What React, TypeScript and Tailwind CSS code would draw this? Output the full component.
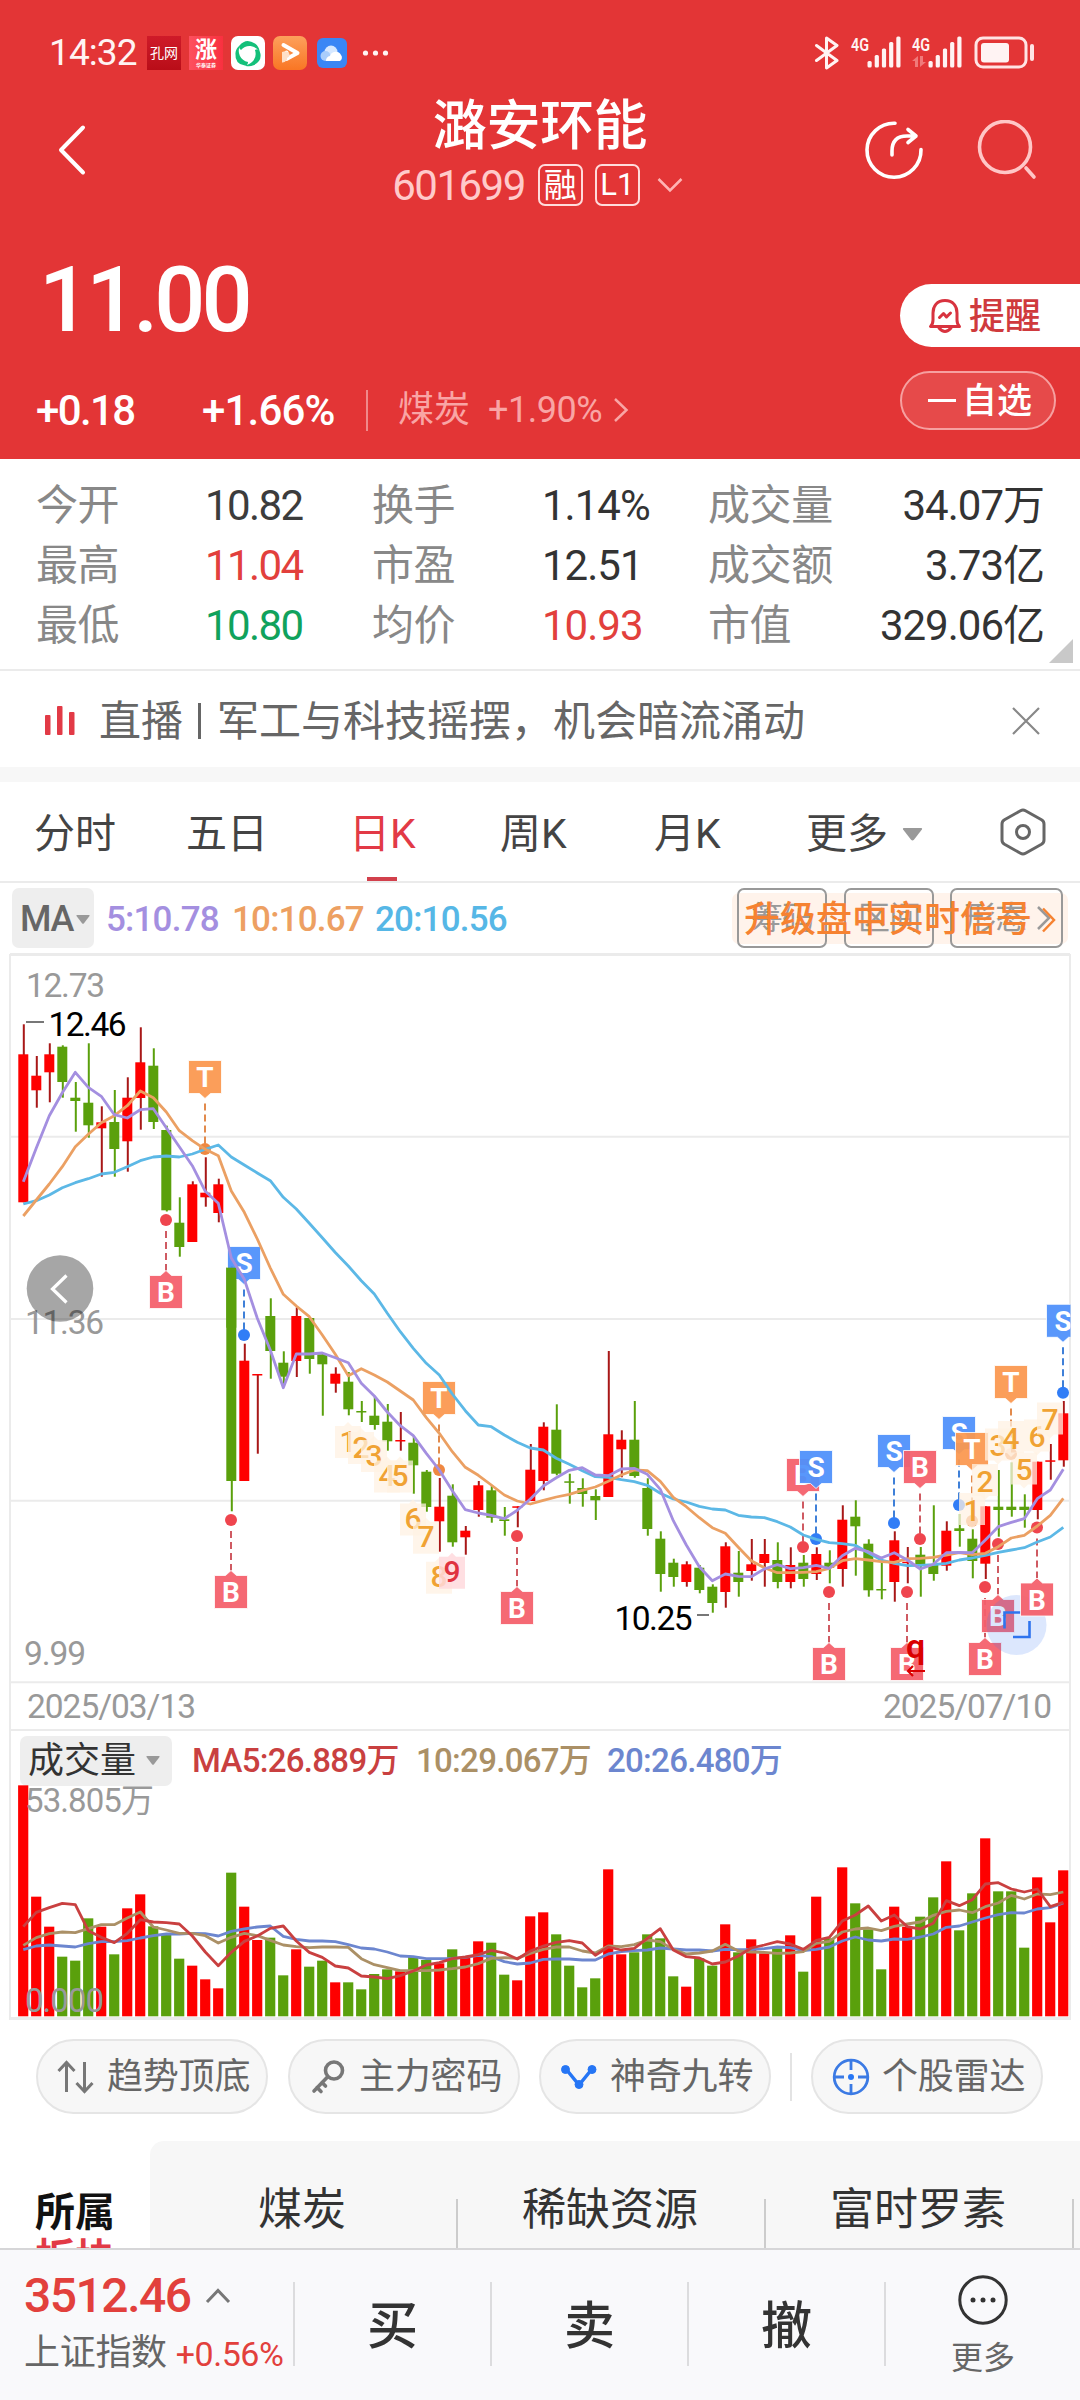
import type { ReactNode } from 'react'

type Candle = [up: 0 | 1, top: number, bottom: number, high: number, low: number]
type MarkKind = 'B' | 'S' | 'T'

// K线间距
const X0 = 23.3
const STEP = 13
const cx = (i: number) => X0 + STEP * i

// [涨跌, 实体上, 实体下, 最高, 最低]
const candles: Candle[] = [
  [1, 1054.3, 1202.3, 1024.3, 1202.3], [1, 1075.7, 1090.3, 1056, 1107.7], [1, 1054.3, 1072.3, 1043.3, 1102.3],
  [0, 1046.7, 1082, 1045.3, 1097.7], [0, 1097.7, 1101, 1082, 1131.7], [0, 1102.7, 1125.3, 1043.3, 1137.7],
  [1, 1122.3, 1128.3, 1106.3, 1176.7], [0, 1122, 1149, 1090, 1176.7], [1, 1097.7, 1141.3, 1077.3, 1171.7],
  [1, 1062.3, 1098, 1027.3, 1129.7], [0, 1065.7, 1122, 1048.3, 1129], [0, 1130, 1210.3, 1125.7, 1211.5],
  [0, 1222.7, 1247, 1197.3, 1256.7], [1, 1184.3, 1242, 1181.3, 1242], [1, 1192.7, 1197.3, 1157.3, 1206.7],
  [1, 1184.3, 1213, 1178.7, 1222.3], [0, 1267.7, 1481, 1266, 1511.3], [1, 1360.7, 1481, 1343.7, 1481],
  [1, 1374, 1375.5, 1374, 1453.7], [0, 1316, 1351, 1298.3, 1378.7], [0, 1362.7, 1376.7, 1351.3, 1385],
  [1, 1316, 1361, 1307.3, 1377], [0, 1318, 1359, 1318, 1373.7], [0, 1354.3, 1364.3, 1354.3, 1415.7],
  [1, 1373.7, 1383.7, 1367.3, 1392.7], [0, 1381.7, 1409.3, 1372, 1415.3], [0, 1411, 1412.5, 1401, 1422],
  [0, 1415.7, 1425, 1396.7, 1429.7], [0, 1421.7, 1441.3, 1404, 1450.7], [1, 1440, 1441.5, 1412, 1450.7],
  [0, 1442.7, 1465.3, 1436.7, 1493.7], [0, 1471.7, 1507, 1470, 1511.7], [1, 1506.7, 1521.3, 1478, 1551.7],
  [0, 1495.7, 1542.3, 1484.3, 1546.7], [1, 1530.7, 1537.3, 1526, 1554.7], [1, 1485.3, 1510, 1481, 1516.7],
  [0, 1490.3, 1517.7, 1485, 1522.7], [0, 1519.3, 1521, 1507, 1535.7], [1, 1506.3, 1507.8, 1506.3, 1527.3],
  [1, 1469.7, 1501, 1444, 1501], [1, 1426.7, 1481, 1422.3, 1490.3], [0, 1429.7, 1473.7, 1404.3, 1475.3],
  [0, 1481.3, 1482.8, 1473.7, 1503.7], [0, 1488, 1494, 1478.3, 1506.7], [0, 1496, 1500.3, 1489.3, 1520],
  [1, 1434.3, 1497, 1351, 1497], [1, 1439.7, 1449.3, 1430.3, 1477.3], [0, 1439.7, 1476, 1401, 1477.7],
  [0, 1488, 1529, 1478.3, 1535.7], [0, 1538.7, 1574, 1531.3, 1591.7], [0, 1562.7, 1577, 1558.7, 1586.7],
  [1, 1564.3, 1582, 1561.3, 1586.7], [0, 1567.7, 1590, 1565, 1593.3], [0, 1586.7, 1603, 1584.3, 1612.7],
  [1, 1546.3, 1592, 1542.3, 1607.7], [0, 1572.7, 1582, 1551, 1596.7], [1, 1564.3, 1571, 1539, 1580.7],
  [1, 1554, 1563, 1539, 1586.7], [0, 1560, 1582, 1542.3, 1588.3], [1, 1565, 1582, 1547.3, 1588.3],
  [0, 1562.7, 1579, 1555, 1586.7], [1, 1554, 1574, 1547.3, 1580], [0, 1562.7, 1567.7, 1550.3, 1583.3],
  [1, 1519.7, 1569, 1505.3, 1586.7], [0, 1516.7, 1526.3, 1500.3, 1575.7], [0, 1543.7, 1590.3, 1539.3, 1596.7],
  [0, 1589, 1590.5, 1561.7, 1599.3], [1, 1540.3, 1582, 1531.3, 1601.7], [1, 1561.7, 1563.2, 1547, 1583.3],
  [0, 1554.7, 1564.3, 1547, 1596.7], [0, 1564.3, 1574, 1505.3, 1580.7], [1, 1530.7, 1565.7, 1521.3, 1570.7],
  [0, 1528.3, 1531, 1514, 1546.7], [0, 1538.7, 1561, 1529.3, 1578.3], [1, 1506.3, 1563.7, 1506.3, 1579],
  [0, 1506.7, 1510, 1470, 1536.7], [0, 1506.7, 1510, 1462.3, 1516.7], [0, 1506.7, 1510, 1494.3, 1527.7],
  [1, 1461.7, 1510, 1461.7, 1519.3], [1, 1460.3, 1461.8, 1444, 1479.7], [1, 1413.3, 1460.3, 1401, 1466.7],
]

const ma5 = [
  1181.7, 1148, 1115.7, 1092.7, 1072.3, 1087.3, 1096.3, 1114.7, 1118, 1109.7, 1108.7, 1127.7, 1146.7, 1165.7, 1191.3,
  1203.3, 1258, 1279.3, 1318.3, 1350, 1387.7, 1354, 1354, 1353, 1357.7, 1362.7, 1383.3, 1396, 1412, 1425.7, 1435.7,
  1453.3, 1470, 1490.7, 1509.7, 1513, 1515.3, 1518.7, 1510.3, 1499, 1486, 1477.7, 1470.3, 1467.7, 1475, 1475.7, 1469,
  1468.3, 1474.3, 1489.3, 1520.7, 1545, 1566.7, 1580.7, 1574, 1576.3, 1576.7, 1569, 1564.7, 1568.7, 1567.7, 1565.3,
  1568.3, 1555.7, 1548.3, 1551.7, 1558, 1552.7, 1560, 1569, 1564.3, 1552.7, 1552.3, 1552.7, 1540, 1526.7, 1522.3,
  1518.7, 1498.7, 1490, 1469.3,
]
const ma10 = [
  1216, 1200, 1184, 1166.7, 1146.7, 1134.3, 1122.7, 1115.7, 1105.7, 1091, 1097.7, 1112, 1130.7, 1140.7, 1149.3, 1155.7,
  1191, 1212.3, 1239, 1268, 1294.3, 1306, 1316.7, 1335, 1354.3, 1375.7, 1368.7, 1375, 1382, 1391, 1400, 1417.7, 1433.3,
  1451.7, 1467.3, 1475.3, 1485, 1495, 1501, 1504, 1500.3, 1497, 1494.3, 1490.3, 1487, 1481.3, 1475, 1470, 1470.7,
  1481.3, 1497.3, 1506.7, 1517.7, 1527.7, 1533.3, 1547.3, 1560.7, 1567.7, 1572.7, 1572.7, 1572.3, 1571.7, 1568.3,
  1560.7, 1558.7, 1560, 1561.7, 1562.3, 1558.7, 1558.3, 1557.3, 1555, 1552.7, 1554.7, 1553.3, 1546.7, 1538, 1535.3,
  1526, 1515.3, 1498.3,
]
const ma20 = [
  1204, 1200.7, 1195, 1187.7, 1182.7, 1178.7, 1174, 1172.3, 1166.7, 1160.7, 1157, 1156, 1157, 1154, 1149.3, 1145, 1157,
  1165, 1173, 1180.7, 1197.3, 1209, 1223.3, 1237.7, 1252.5, 1266, 1280.7, 1294, 1313.3, 1331.7, 1348.3, 1363.3, 1375,
  1394, 1410.7, 1425, 1426.7, 1435, 1442.3, 1448, 1450, 1458.3, 1464.3, 1470.7, 1476.7, 1477.3, 1479.7, 1481.7, 1485.3,
  1493.3, 1499, 1502, 1506.3, 1509, 1510, 1515.3, 1517, 1517.7, 1521.7, 1527, 1535, 1539.3, 1542.7, 1543.7, 1545.3,
  1552.7, 1560, 1563.3, 1565.7, 1565.3, 1564.7, 1563.3, 1560, 1558, 1555.3, 1552.3, 1550, 1547.7, 1542, 1537, 1527.3,
]

// 成交量（坐标为 1/3 像素，基线 889）
const volumes = [
  196, 530, 620, 710, 722, 595, 620, 703, 565, 523, 619, 645, 716, 737, 778, 805, 458, 560, 660, 653, 766, 688, 740, 722,
  787, 787, 808, 762, 748, 754, 710, 720, 730, 688, 712, 664, 668, 764, 781, 589, 577, 643, 737, 802, 775, 448, 703, 697,
  643, 655, 769, 800, 715, 737, 613, 697, 658, 700, 685, 646, 755, 530, 655, 442, 550, 628, 748, 560, 620, 590, 532, 424,
  631, 520, 355, 514, 514, 683, 472, 607, 451,
]
const vol5 = [
  620, 577, 563, 550, 554, 632, 652, 668, 640, 599, 606, 608, 612, 648, 696, 737, 697, 664, 648, 625, 618, 663, 697, 712,
  738, 744, 768, 771, 776, 767, 753, 735, 728, 716, 711, 704, 691, 699, 717, 693, 678, 667, 662, 669, 706, 681, 690, 685,
  655, 626, 690, 710, 714, 732, 726, 708, 684, 675, 665, 672, 688, 661, 652, 603, 585, 558, 603, 585, 620, 627, 610, 542,
  557, 539, 492, 488, 507, 516, 507, 560, 547,
]
const vol10 = [
  676, 653, 641, 636, 638, 626, 614, 614, 594, 576, 621, 630, 640, 640, 647, 669, 652, 640, 647, 661, 675, 680, 683, 681,
  681, 682, 716, 734, 743, 752, 752, 752, 750, 746, 741, 731, 715, 713, 715, 700, 688, 681, 681, 693, 699, 678, 680, 674,
  660, 665, 688, 702, 699, 693, 673, 693, 696, 697, 700, 699, 695, 670, 664, 636, 627, 624, 632, 619, 612, 606, 586, 574,
  570, 578, 560, 549, 526, 537, 522, 524, 516,
]
const vol20 = [
  689, 678, 675, 678, 681, 671, 665, 665, 662, 654, 647, 642, 642, 640, 641, 648, 634, 627, 621, 618, 649, 658, 663, 663,
  665, 674, 684, 687, 696, 708, 710, 716, 716, 715, 712, 706, 710, 725, 732, 729, 718, 717, 717, 720, 720, 702, 695, 692,
  690, 684, 687, 690, 690, 693, 688, 689, 689, 686, 681, 683, 692, 688, 681, 663, 651, 660, 663, 657, 658, 651, 642, 622,
  618, 606, 594, 584, 578, 579, 567, 563, 549,
]

const line = (ys: number[]) => ys.map((y, i) => `${cx(i)},${y}`).join(' ')
const volY = (v: number) => 1720 + v / 3

const markColor = { B: '#f4606b', S: '#4f90fb', T: '#fb9850' }
const dotColor = { B: '#ee3b45', S: '#2676f5', T: '#ee8237' }
const dashColor = { B: '#cf5a62', S: '#3f80d8', T: '#e28a4c' }

// 买卖点标记
function Mark({ i, kind, y, below }: { i: number; kind: MarkKind; y: number; below?: boolean }) {
  const x = cx(i) - 0.3
  const dot = below ? y - 55.5 : y + 88.5
  return (
    <g>
      {below ? (
        <line x1={x} x2={x} y1={dot + 11} y2={y - 5} stroke={dashColor[kind]} strokeWidth="2" strokeDasharray="7 4" />
      ) : (
        <line x1={x} x2={x} y1={y + 43} y2={dot - 5} stroke={dashColor[kind]} strokeWidth="2" strokeDasharray="7 4" />
      )}
      <circle cx={x} cy={dot} r="6" fill={dotColor[kind]} opacity="0.95" />
      <path
        d={
          below
            ? `M${x - 16.5} ${y}h11l5.5 -5l5.5 5h11v33h-33z`
            : `M${x - 16.5} ${y}h33v33h-11l-5.5 5l-5.5 -5h-11z`
        }
        fill={markColor[kind]}
        fillOpacity="0.94"
        stroke="#fff"
        strokeOpacity="0.8"
        strokeWidth="1"
      />
      <text x={x} y={y + 26.5} textAnchor="middle" fontSize="28" fontWeight="700" fill="#fff">{kind}</text>
    </g>
  )
}

// 九转序列数字
function Nine({ i, n, y, below }: { i: number; n: number; y: number; below?: boolean }) {
  const x = cx(i) - 0.3
  const hot = n === 9
  return (
    <g>
      <path
        d={
          below
            ? `M${x - 13} ${y - 15}h9l4 -4l4 4h9v32h-26z`
            : `M${x - 13} ${y - 17}h26v32h-9l-4 4l-4 -4h-9z`
        }
        fill={hot ? '#ffd9dd' : '#fff1e3'}
        fillOpacity={hot ? 0.85 : 0.75}
      />
      <text x={x} y={y + 10.5} textAnchor="middle" fontSize="30" fontWeight="500" fill={hot ? '#e0323f' : '#f0a233'}>{n}</text>
    </g>
  )
}

function Down({ className }: { className: string }) {
  return (
    <svg className={className} viewBox="0 0 14 9" fill="#999">
      <path d="M1 0h12q1 0 .5 1L8 8.2q-1 1-2 0L.5 1Q0 0 1 0z" />
    </svg>
  )
}

function Signal({ dim }: { dim?: boolean }) {
  return (
    <svg className="overflow-visible" width="49" height="34" viewBox="0 0 49 34" fill="#fff3f3">
      <text x="0" y="15" fontSize="19" fontWeight="600" textLength="18" lengthAdjust="spacingAndGlyphs">4G</text>
      {dim && (
        <g fill="#f07a7a">
          <path d="M0 25l6-5v11h-3v-6zM8 20v11l6-5h-3v-6z" />
        </g>
      )}
      {[25, 19, 12.5, 6, 0.5].map((y, i) => (
        <rect key={y} x={16.5 + i * 7.2} y={y} width="4.2" height={31.5 - y} rx="1.5" />
      ))}
    </svg>
  )
}

function StatusBar() {
  return (
    <div className="flex h-[88px] items-center pt-[17px] pl-[49px]">
      <span className="w-[98px] text-[37px] leading-[40px] tracking-[-0.9px] text-[#fff3f3]">14:32</span>
      <div className="flex h-[34px] w-[34px] items-center justify-center bg-linear-to-b from-[#cf1a29] to-[#b90d18] text-[14px] leading-none text-white">孔网</div>
      <div className="ml-2 flex h-[34px] w-[34px] flex-col items-center justify-center bg-linear-to-r from-[#fd4f5e] to-[#f9303f] text-white">
        <span className="text-[22px] leading-[24px] font-bold">涨</span>
        <span className="text-[5px] leading-[6px] font-bold">华泰证券</span>
      </div>
      <svg className="ml-2" width="34" height="34" viewBox="0 0 34 34">
        <rect width="34" height="34" rx="7" fill="#fff" />
        <g fill="#14c07a">
          <path id="petal" d="M8.500 9.500Q15 1.500 24 7.500Q28 10.500 28.500 15Q24.500 10.500 19.500 10Q14 9.500 10 14Q7 12 8.500 9.500z" />
          <use href="#petal" transform="rotate(120 17 18)" />
          <use href="#petal" transform="rotate(240 17 18)" />
        </g>
      </svg>
      <svg className="ml-2" width="34" height="34" viewBox="0 0 34 34">
        <defs>
          <linearGradient id="play" x2="0" y2="1">
            <stop stopColor="#fda05c" />
            <stop offset="1" stopColor="#f97624" />
          </linearGradient>
        </defs>
        <rect width="34" height="34" rx="7" fill="url(#play)" />
        <path d="M10.500 9L24.500 17L13.500 23V16.500" fill="none" stroke="#fff" strokeWidth="4" strokeLinejoin="round" strokeLinecap="round" />
        <path d="M9 16q5-2 7 1t-2 5v2q-3 3-5 2.500z" fill="#ffe0c8" />
      </svg>
      <svg className="ml-[10px]" width="30" height="30" viewBox="0 0 30 30">
        <rect width="30" height="30" rx="6" fill="#3a86f5" />
        <circle cx="14" cy="14" r="6.500" fill="#d6e8ff" />
        <circle cx="8.500" cy="18" r="5" fill="#a9cdfb" />
        <path d="M9 23a4.500 4.500 0 0 1 4-5a6 6 0 0 1 11-1a4 4 0 0 1-1 6z" fill="#fff" />
      </svg>
      <svg className="ml-[15px]" width="28" height="6" viewBox="0 0 28 6" fill="#fff3f3">
        <circle cx="3.500" cy="3" r="2.600" /><circle cx="13.500" cy="3" r="2.600" /><circle cx="23.500" cy="3" r="2.600" />
      </svg>
      <svg className="ml-[424px]" width="26" height="34" viewBox="0 0 26 34" fill="none" stroke="#fff3f3" strokeWidth="3" strokeLinejoin="round" strokeLinecap="round">
        <path d="M2.500 9.500L23 24.500L12.500 32V2L23 9.500L2.500 24.500" />
      </svg>
      <div className="ml-[11px]"><Signal /></div>
      <div className="ml-3"><Signal dim /></div>
      <svg className="ml-[13px]" width="62" height="34" viewBox="0 0 62 34">
        <rect x="2" y="2" width="50" height="29" rx="7" fill="none" stroke="#ffe4e4" strokeWidth="3" />
        <rect x="7" y="7" width="28" height="19.500" rx="3" fill="#fff3f3" />
        <rect x="56" y="8" width="4" height="17" rx="2" fill="#ffe4e4" />
      </svg>
    </div>
  )
}

function NavBar() {
  return (
    <div className="grid h-[124px] grid-cols-[300px_480px_300px] items-center text-white">
      <svg className="ml-[56px]" width="32" height="52" viewBox="0 0 32 52" fill="none" stroke="#fff" strokeWidth="4" strokeLinecap="round" strokeLinejoin="round">
        <path d="M27 3.500L5 26L27 48.500" />
      </svg>
      <div className="flex flex-col items-center">
        <h1 className="text-[54px] leading-[64px] font-medium tracking-[-0.5px]">潞安环能</h1>
        <div className="mt-[5px] mr-[5px] flex h-[42px] items-center">
          <span className="pt-[2px] text-[42px] leading-[42px] tracking-[-1.500px] text-[#ffcaca]">601699</span>
          <span className="ml-[13px] flex h-[42px] w-[45px] items-center justify-center rounded-[7px] border-2 border-[#ffdcdc] pt-[2px] text-[33px] leading-none">融</span>
          <span className="ml-3 flex h-[42px] w-[45px] items-center justify-center rounded-[7px] border-2 border-[#ffdcdc] text-[31px] leading-none">L1</span>
          <svg className="ml-[17px]" width="26" height="16" viewBox="0 0 26 16" fill="none" stroke="#ffb4b4" strokeWidth="2.500">
            <path d="M1.500 2L13 13.500L24.500 2" />
          </svg>
        </div>
      </div>
      <div className="flex items-center pl-[84px]">
        <svg width="60" height="60" viewBox="0 0 60 60" fill="none" stroke="#fff" strokeWidth="3.600" strokeLinecap="round" strokeLinejoin="round">
          <path d="M31 3.200A27 27 0 1 0 57 29.500" />
          <path d="M28 35V31Q28 16 43 16H52M44 9.500L52 16L44 22.500" />
        </svg>
        <svg className="ml-[53px]" width="60" height="60" viewBox="0 0 60 60" fill="none" stroke="#ffc6c6" strokeWidth="3.600" strokeLinecap="round">
          <circle cx="28" cy="27" r="25.500" />
          <path d="M49 48L57 57" />
        </svg>
      </div>
    </div>
  )
}

function Quote() {
  return (
    <div className="flex h-[247px] justify-between text-white">
      <div className="pl-[36px]">
        <div className="mt-[43px] h-[92px] pl-[3px] text-[90px] leading-[92px] font-medium tracking-[-4px]">11.00</div>
        <div className="mt-[42px] flex h-[42px] items-center">
          <span className="w-[166px] pt-[1px] text-[42px] font-medium tracking-[-1.600px]">+0.18</span>
          <span className="w-[164px] pt-[1px] text-[42px] font-medium tracking-[-0.800px]">+1.66%</span>
          <span className="h-[41px] w-[2px] bg-[#f08a8a]" />
          <span className="ml-[30px] text-[36px] text-[#f9a5a5]">煤炭</span>
          <span className="ml-[18px] text-[36px] tracking-[-0.500px] text-[#f9a5a5]">+1.90%</span>
          <svg className="ml-[11px]" width="16" height="26" viewBox="0 0 16 26" fill="none" stroke="#f9a5a5" strokeWidth="2.500">
            <path d="M2 2L13.500 13L2 24" />
          </svg>
        </div>
      </div>
      <div className="mt-[72px] w-[180px]">
        <div className="flex h-[63px] items-center rounded-l-full bg-white pl-[28px] text-[#cf3a3d]">
          <svg width="34" height="36" viewBox="0 0 34 36" fill="none" stroke="#d8333f" strokeWidth="3" strokeLinejoin="round" strokeLinecap="round">
            <path d="M17 2.500C9 2.500 5 8 5 15V22Q5 26 2.500 28.500H31.500Q29 26 29 22V15C29 8 25 2.500 17 2.500z" />
            <path d="M11 30Q17 37 23 30M11.500 19.500L15.500 15.500L18.500 19L22.500 15" />
          </svg>
          <span className="ml-[7px] pt-[2px] text-[36px] leading-[40px] font-medium">提醒</span>
        </div>
        <div className="mt-[24px] flex h-[59px] w-[156px] items-center rounded-full border-2 border-[#f6a0a0] bg-[#e64a4a] pl-[26px]">
          <span className="h-[3.500px] w-[28px] bg-white" />
          <span className="ml-[6px] pt-[2px] text-[35px] leading-[40px] font-medium">自选</span>
        </div>
      </div>
    </div>
  )
}

const stats = [
  ['今开', '10.82', 'text-[#3c3c3c]', '换手', '1.14%', 'text-[#333]', '成交量', '34.07万'],
  ['最高', '11.04', 'text-[#e2403c]', '市盈', '12.51', 'text-[#333]', '成交额', '3.73亿'],
  ['最低', '10.80', 'text-[#10a25c]', '均价', '10.93', 'text-[#e2403c]', '市值', '329.06亿'],
]

function Stats() {
  return (
    <div className="relative h-[212px] border-b-2 border-[#ebebeb] px-[36px] pt-[17px]">
      {stats.map(([a, av, ac, b, bv, bc, c, cv]) => (
        <div key={a} className="flex h-[60px] items-center text-[42px] tracking-[-1px]">
          <span className="w-[169px] tracking-[-0.400px] text-[#888]">{a}</span>
          <span className={`w-[167px] tracking-[-1.600px] ${ac}`}>{av}</span>
          <span className="w-[170px] tracking-[-0.400px] text-[#888]">{b}</span>
          <span className={`w-[166px] ${bc}`}>{bv}</span>
          <span className="tracking-[-0.400px] text-[#888]">{c}</span>
          <span className="ml-auto text-[#333]">{cv}</span>
        </div>
      ))}
      <svg className="absolute right-[7px] bottom-[6px]" width="24" height="24" viewBox="0 0 24 24" fill="#c9c9c9">
        <path d="M24 0V24H0z" />
      </svg>
    </div>
  )
}

function LiveBanner() {
  return (
    <div className="flex h-[96px] items-center pt-[3px] pl-[44px] text-[42px] text-[#666]">
      <svg width="32" height="30" viewBox="0 0 32 30" fill="#e23a46">
        <rect x="1" y="9" width="5.500" height="20" rx="1" />
        <rect x="13" y="0" width="5.500" height="29" rx="1" />
        <rect x="25" y="6" width="5.500" height="23" rx="1" />
      </svg>
      <span className="ml-[23px] pt-[2px]">直播</span>
      <span className="ml-[15px] h-[36px] w-[3px] bg-[#666]" />
      <span className="ml-[16px] pt-[2px]">军工与科技摇摆，机会暗流涌动</span>
      <svg className="mr-[39px] ml-auto" width="30" height="30" viewBox="0 0 30 30" stroke="#888" strokeWidth="2.200">
        <path d="M2 2L28 28M28 2L2 28" />
      </svg>
    </div>
  )
}

const periods = [
  { name: '分时', pos: 'ml-[34px] w-[152px]' },
  { name: '五日', pos: 'w-[163px]' },
  { name: '日K', pos: 'w-[151px]', active: true },
  { name: '周K', pos: 'w-[154px]' },
  { name: '月K', pos: 'w-[152px]' },
]

function PeriodTabs() {
  return (
    <div className="flex h-[101px] items-center border-b-2 border-[#ebebeb] text-[41px] text-[#444]">
      {periods.map(p => (
        <div key={p.name} className={`relative flex h-full items-center pt-[5px] ${p.pos} ${p.active ? 'text-[#e23a46]' : ''}`}>
          {p.name}
          {p.active && <span className="absolute bottom-0 left-[18px] h-[4px] w-[30px] bg-[#d2404c]" />}
        </div>
      ))}
      <span className="pt-[5px]">更多</span>
      <Down className="mt-[5px] ml-[14px] h-[13px] w-[21px]" />
      <svg className="ml-[77px]" width="46" height="48" viewBox="0 0 46 48" fill="none" stroke="#666" strokeWidth="3" strokeLinejoin="round">
        <path d="M20.500 2.700Q23 1.300 25.500 2.700L41.500 11.800Q44 13.300 44 16V32Q44 34.700 41.500 36.200L25.500 45.300Q23 46.700 20.500 45.300L4.500 36.200Q2 34.700 2 32V16Q2 13.300 4.500 11.800z" />
        <circle cx="23" cy="24" r="6.500" />
      </svg>
    </div>
  )
}

function Tool({ children, className }: { children: ReactNode; className: string }) {
  return (
    <span className={`flex h-[60px] items-center rounded-[7px] border-2 border-[#999] pl-[12px] text-[32px] text-[#999] ${className}`}>
      {children}
    </span>
  )
}

function MaRow() {
  return (
    <div className="flex h-[70px] items-center text-[35px] font-medium tracking-[-0.800px]">
      <span className="ml-[12px] flex h-[60px] w-[82px] items-center rounded-[7px] bg-[#eee] pt-[2px] pl-[8px] text-[36px] tracking-[-1.400px] text-[#666]">
        MA
        <Down className="ml-[3px] h-[9px] w-[14px]" />
      </span>
      <span className="ml-[12px] w-[126px] pt-[2px] text-[#a48fe0]">5:10.78</span>
      <span className="w-[143px] pt-[2px] text-[#eda062]">10:10.67</span>
      <span className="pt-[2px] text-[#56b7e6]">20:10.56</span>
      <div className="relative mr-[17px] ml-auto flex font-normal">
        <span className="absolute top-[5px] -left-[5px] h-[51px] w-[336px] rounded-[7px] bg-[#fff3eb]" />
        <div className="relative flex">
          <Tool className="w-[90px]">筹码</Tool>
          <Tool className="ml-[17px] w-[90px]">区间</Tool>
          <Tool className="ml-[16px] w-[113px]">
            形态
            <svg className="ml-[10px]" width="15" height="24" viewBox="0 0 15 24" fill="none" stroke="#999" strokeWidth="2.500">
              <path d="M2 1L13 12L2 23" />
            </svg>
          </Tool>
        </div>
        <div className="absolute top-[6px] left-[7px] flex h-[51px] items-center text-[36px] font-medium tracking-[0px] whitespace-nowrap text-[#f68231]">
          升级盘中实时信号
          <svg className="ml-[9px]" width="15" height="26" viewBox="0 0 15 26" fill="none" stroke="#f68231" strokeWidth="2.500">
            <path d="M2 1.500L13 13L2 24.500" />
          </svg>
        </div>
      </div>
    </div>
  )
}

function PriceChart() {
  return (
    <svg className="block" width="1080" height="777" viewBox="0 953 1080 777">
      <g fill="none" stroke="#ebebeb" strokeWidth="2">
        <path d="M10 1730V955H1070V1730" />
        <path d="M10 954.500H1070" strokeWidth="3" />
        <path d="M10 1136.700H1070M10 1319H1070M10 1500.700H1070M10 1682.300H1070" />
      </g>
      <g fill="#999" fontSize="33.500">
        <text x="26" y="997" textLength="79">12.73</text>
        <text x="25" y="1333.500" textLength="79">11.36</text>
        <text x="24" y="1664.500" textLength="62">9.99</text>
        <text x="27" y="1718" textLength="169">2025/03/13</text>
        <text x="883" y="1718" textLength="169">2025/07/10</text>
      </g>
      {candles.map(([up, top, bottom, high, low], i) => (
        <g key={i} fill={up ? '#fe0000' : '#5aa00c'}>
          <rect x={cx(i) - 0.5} y={high} width="2" height={low - high} fill={up ? '#a81818' : '#5aa00c'} />
          <rect x={cx(i) - 5} y={top} width="10" height={bottom - top} />
        </g>
      ))}
      <Mark i={17} kind="S" y={1246.5} />
      <rect x={cx(16) - 5} y="1267.700" width="10" height="60" fill="#5aa00c" />
      <Nine i={25} n={1} y={1441} below />
      <Nine i={26} n={2} y={1447} below />
      <Nine i={27} n={3} y={1455} below />
      <Nine i={28} n={4} y={1475.5} below />
      <Nine i={29} n={5} y={1475.5} below />
      <Nine i={30} n={6} y={1518.5} below />
      <Nine i={31} n={7} y={1536.7} below />
      <Nine i={32} n={8} y={1576.7} below />
      <Nine i={33} n={9} y={1571.7} below />
      <Mark i={14} kind="T" y={1060.5} />
      <Mark i={11} kind="B" y={1275.5} below />
      <Mark i={16} kind="B" y={1575.5} below />
      <Mark i={32} kind="T" y={1381.5} />
      <Mark i={38} kind="B" y={1591.5} below />
      <Mark i={60} kind="B" y={1458.5} />
      <Mark i={61} kind="S" y={1450.5} />
      <Mark i={62} kind="B" y={1647.5} below />
      <Mark i={67} kind="S" y={1434.5} />
      <Mark i={68} kind="B" y={1647.5} below />
      <Mark i={69} kind="B" y={1450.5} />
      <Mark i={72} kind="S" y={1416.5} />
      <Mark i={73} kind="T" y={1432.5} />
      <Mark i={74} kind="B" y={1642.5} below />
      <Mark i={75} kind="B" y={1599.5} below />
      <Mark i={76} kind="T" y={1365.5} />
      <Nine i={73} n={1} y={1510} />
      <Nine i={74} n={2} y={1481} />
      <Nine i={75} n={3} y={1445.5} />
      <Nine i={76} n={4} y={1438} />
      <Nine i={77} n={5} y={1469.5} />
      <Nine i={78} n={6} y={1436.5} />
      <Nine i={79} n={7} y={1419.5} />
      <circle cx="1016.500" cy="1625" r="30" fill="#3b78f2" fillOpacity="0.18" />
      <path d="M1004.500 1628.500V1612.500H1021M1029.500 1621V1637H1013" fill="none" stroke="#2f74ee" strokeWidth="2.600" />
      <Mark i={78} kind="B" y={1583} below />
      <svg x="0" y="953" width="1070.500" height="777" viewBox="0 953 1070.500 777">
        <Mark i={80} kind="S" y={1304.3} />
      </svg>
      <g fill="none" strokeWidth="2.800" strokeLinejoin="round">
        <polyline points={line(ma20)} stroke="#5cb8e6" />
        <polyline points={line(ma10)} stroke="#eba063" />
        <polyline points={line(ma5)} stroke="#a48fe0" />
      </g>
      {/* 最高最低价 */}
      <path d="M26 1022H44M697 1615H709" stroke="#777" strokeWidth="1.800" />
      <g fill="#000" fontSize="33.500">
        <text x="48.500" y="1036" textLength="78">12.46</text>
        <text x="614.500" y="1629.500" textLength="78">10.25</text>
      </g>
      <circle cx="60" cy="1288.500" r="33.300" fill="#000" fillOpacity="0.35" />
      <path d="M66.500 1275.500L52.500 1289L66.500 1302.500" fill="none" stroke="#fff" strokeWidth="3.200" />
      <text x="915.500" y="1658" textAnchor="middle" fontSize="34" fontWeight="600" fill="#da0000">q</text>
      <path d="M925 1671H908M913 1666L908 1671L913 1676" fill="none" stroke="#da0000" strokeWidth="2.200" />
    </svg>
  )
}

function VolumeChart() {
  return (
    <svg className="relative block" width="1080" height="238" viewBox="0 1782 1080 238">
      <path d="M10 1782V2019H1070V1782" fill="none" stroke="#ebebeb" strokeWidth="2" />
      <path d="M9 2018.500H1071" stroke="#ebebeb" strokeWidth="3" />
      {volumes.map((v, i) => (
        <rect key={i} x={cx(i) - 5.2} y={volY(v)} width="10.200" height={2016.3 - volY(v)} fill={candles[i][0] ? '#fe0000' : '#5aa00c'} />
      ))}
      <g fill="none" strokeWidth="2.800" strokeLinejoin="round">
        <polyline points={line(vol20.map(volY))} stroke="#6c86cf" />
        <polyline points={line(vol10.map(volY))} stroke="#ab9066" />
        <polyline points={line(vol5.map(volY))} stroke="#c94040" />
      </g>
      <g fill="#999" fontSize="33">
        <text x="25" y="1812" textLength="129">53.805万</text>
        <text x="25" y="2012" textLength="79">0.000</text>
      </g>
    </svg>
  )
}

function VolumePanel() {
  return (
    <div className="flex h-[291px] flex-col">
      <div className="mx-[9px] flex h-[53px] shrink-0 items-center border-x-2 border-t-2 border-[#ebebeb] pt-[8px] pl-[9px] text-[33px] font-medium">
        <span className="flex h-[50px] w-[152px] items-center rounded-[7px] bg-[#eee] pl-[8px] text-[36px] font-normal text-[#333]">
          成交量
          <Down className="ml-[10px] h-[9px] w-[14px]" />
        </span>
        <span className="ml-[20px] w-[224px] tracking-[-0.700px] text-[#c94040]">MA5:26.889万</span>
        <span className="w-[191px] tracking-[-0.700px] text-[#ab9066]">10:29.067万</span>
        <span className="tracking-[-0.700px] text-[#6c86cf]">20:26.480万</span>
      </div>
      <VolumeChart />
    </div>
  )
}

function Pill({ label, icon, className }: { label: string; icon: ReactNode; className: string }) {
  return (
    <div className={`flex h-[75px] w-[232px] shrink-0 items-center rounded-full border-2 border-[#e5e5e5] bg-[#f7f7f7] pl-[18px] text-[36px] text-[#666] ${className}`}>
      {icon}
      <span className="ml-[11px] pt-[1px] tracking-[-0.200px] whitespace-nowrap">{label}</span>
    </div>
  )
}

function Shortcuts() {
  return (
    <div className="flex h-[121px] items-center pt-[2px] pb-[10px]">
      <Pill
        className="ml-[36px]"
        label="趋势顶底"
        icon={
          <svg width="40" height="36" viewBox="0 0 40 36" fill="none" stroke="#777" strokeWidth="3">
            <path d="M10.500 33V4M2.500 12L10.500 3.500L18.500 12M28.500 3V32M20.500 24L28.500 32.500L36.500 24" />
          </svg>
        }
      />
      <Pill
        className="ml-[20px]"
        label="主力密码"
        icon={
          <svg width="40" height="36" viewBox="0 0 40 36" fill="none" stroke="#777" strokeWidth="3.600" strokeLinecap="round">
            <circle cx="26" cy="11.500" r="8.500" />
            <path d="M19.500 18L6 32M9 28.500L13 32.500M14 23.500L17.500 27" />
          </svg>
        }
      />
      <Pill
        className="ml-[19px]"
        label="神奇九转"
        icon={
          <svg width="40" height="36" viewBox="0 0 40 36" fill="#2676f5" stroke="#2676f5">
            <path d="M7 10L20 26L33 10" fill="none" strokeWidth="3.500" />
            <circle cx="6.500" cy="10.500" r="4" /><circle cx="33" cy="10.500" r="4" /><circle cx="20" cy="25.500" r="4" />
          </svg>
        }
      />
      <span className="ml-[19px] h-[48px] w-[2px] bg-[#e3e3e3]" />
      <Pill
        className="ml-[19px]"
        label="个股雷达"
        icon={
          <svg width="40" height="38" viewBox="0 0 40 38" fill="none" stroke="#3b7ae4" strokeWidth="2.800">
            <circle cx="20" cy="19" r="16.800" />
            <path d="M20 2V12M20 26V36M3 19H13M27 19H37" />
            <circle cx="20" cy="19" r="3" fill="#2676f5" stroke="none" />
          </svg>
        }
      />
    </div>
  )
}

const sectors = ['煤炭', '稀缺资源', '富时罗素']

function Sectors() {
  return (
    <div className="flex h-[107px] overflow-hidden">
      <div className="w-[150px] pt-[49px] pl-[35px] text-[40px] leading-[46px] font-bold text-[#111]">
        <div>所属</div>
        <div className="text-[#e23a46]">板块</div>
      </div>
      <div className="flex flex-1 rounded-tl-[14px] bg-[#f7f7f7]">
        {sectors.map(s => (
          <div key={s} className="flex w-[308px] shrink-0 justify-end">
            <span className="flex-1 pt-[42px] pr-[2px] text-center text-[44px] leading-[54px] text-[#333]">{s}</span>
            <span className="mt-[58px] w-[2px] bg-[#ccc]" />
          </div>
        ))}
      </div>
    </div>
  )
}

function BottomBar() {
  return (
    <div className="flex h-[152px] border-t-2 border-[#d6d6d8] bg-[#f9f9fb] text-[#333]">
      <div className="w-[293px] shrink-0 pt-[20px] pl-[24px]">
        <div className="flex h-[52px] items-center text-[48px] font-medium tracking-[-1.500px] text-[#e2403c]">
          3512.46
          <svg className="ml-[14px]" width="26" height="16" viewBox="0 0 26 16" fill="none" stroke="#777" strokeWidth="3">
            <path d="M2 14L13 2.500L24 14" />
          </svg>
        </div>
        <div className="mt-[10px] flex h-[42px] items-center text-[36px] text-[#666]">
          <span className="tracking-[-0.300px]">上证指数</span>
          <span className="ml-[9px] pt-[2px] text-[34px] tracking-[-0.500px] text-[#e2403c]">+0.56%</span>
        </div>
      </div>
      {['买', '卖', '撤'].map(t => (
        <div key={t} className="flex w-[197px] shrink-0">
          <span className="mt-[32px] h-[84px] w-[2px] bg-[#dcdcde]" />
          <span className="flex-1 pt-[47px] text-center text-[51px] leading-[60px] font-medium">{t}</span>
        </div>
      ))}
      <div className="flex flex-1">
        <span className="mt-[32px] h-[84px] w-[2px] bg-[#dcdcde]" />
        <div className="flex flex-1 flex-col items-center pt-[24px]">
          <svg width="52" height="52" viewBox="0 0 52 52" fill="#333">
            <circle cx="26" cy="26" r="23.200" fill="none" stroke="#333" strokeWidth="3" />
            <circle cx="16" cy="26" r="2.500" /><circle cx="26" cy="26" r="2.500" /><circle cx="36" cy="26" r="2.500" />
          </svg>
          <span className="mt-[12px] text-[32px] leading-[40px] text-[#666]">更多</span>
        </div>
      </div>
    </div>
  )
}

export default function App() {
  return (
    <div className="h-[2400px] w-[1080px] overflow-hidden bg-white font-[Roboto,'Noto_Sans_CJK_SC',sans-serif] leading-none">
      <header className="h-[459px] bg-[#e33536]">
        <StatusBar />
        <NavBar />
        <Quote />
      </header>
      <Stats />
      <LiveBanner />
      <div className="h-[15px] bg-[#f7f7f7]" />
      <PeriodTabs />
      <MaRow />
      <PriceChart />
      <div className="-mt-[1px]"><VolumePanel /></div>
      <Shortcuts />
      <Sectors />
      <BottomBar />
    </div>
  )
}
